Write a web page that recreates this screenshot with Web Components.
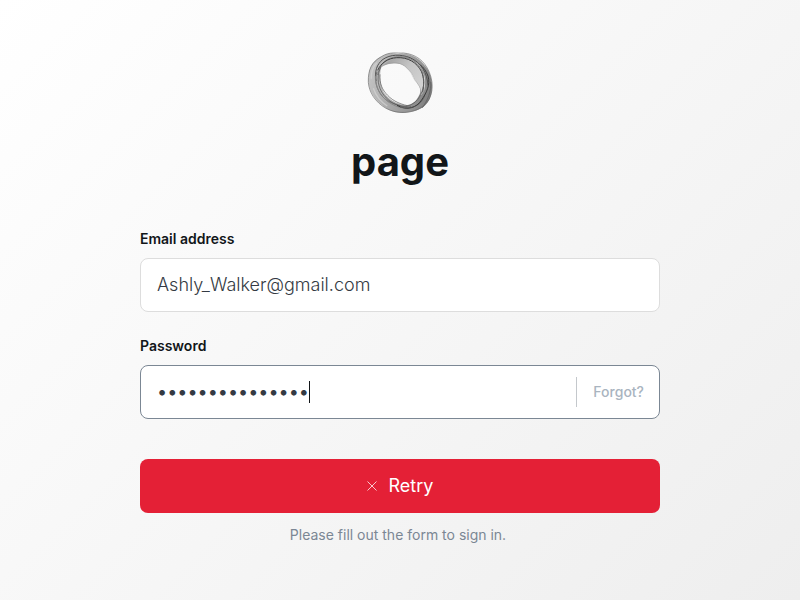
<!DOCTYPE html>
<html lang="en">
<head>
<meta charset="utf-8">
<meta name="viewport" content="width=device-width, initial-scale=1">
<title>Sign in</title>
<style>
html { height: 100%; }
body { margin: 0; min-height: 100%; display: flex; flex-direction: column; font-family: Inter, "Liberation Sans", sans-serif; color: #121619; background: linear-gradient(135deg, #ffffff, #eeeeee); }
</style>
</head>
<body>
<sign-in-page></sign-in-page>
<script>
const define = (name, html, setup) => customElements.define(name, class extends HTMLElement {
  constructor() {
    super();
    this.attachShadow({ mode: "open" }).innerHTML = html;
  }
  connectedCallback() { if (setup) setup(this, this.shadowRoot); }
});

define("brand-ring", `
<style>
:host { display: block; width: 80px; height: 75px; }
svg { display: block; width: 100%; height: 100%; }
</style>
<svg viewBox="0 0 240 225" fill="none" aria-hidden="true">
  <defs>
    <linearGradient id="band" x1="25" y1="90" x2="218" y2="140" gradientUnits="userSpaceOnUse">
      <stop offset="0" stop-color="#c4c4c4"/><stop offset=".35" stop-color="#aeaeae"/><stop offset=".75" stop-color="#949494"/><stop offset="1" stop-color="#7c7c7c"/>
    </linearGradient>
    <linearGradient id="veil" x1="90" y1="45" x2="195" y2="130" gradientUnits="userSpaceOnUse">
      <stop offset="0" stop-color="#a5a5a5"/><stop offset=".4" stop-color="#c4c4c4"/><stop offset="1" stop-color="#d5d5d5"/>
    </linearGradient>
  </defs>
  <path fill="url(#band)" fill-rule="evenodd" d="M25 105C25 65 40 46 66 34C82 24 95 23 112 27C147 20 178 38 198 66C214 87 221 122 213 151C205 182 180 198 145 202C119 208 91 200 69 183C39 160 26 132 25 105ZM64 67C57 92 61 121 72 143C89 164 107 176 132 180C157 184 174 164 181 142C183 124 172 113 164 101C158 88 151 74 140 68C126 52 88 50 64 67Z"/>
  <path fill="url(#veil)" d="M69 61C98 33 142 31 171 53C193 70 201 103 192 139L183 151C186 129 171 117 163 101C158 83 152 81 142 71C128 53 96 50 69 61Z"/>
  <path stroke="#6a6a6a" stroke-width="2" d="M25 112C24 73 35 51 64 35C90 18 112 26 130 24C166 27 194 47 208 82C223 119 219 159 190 183C159 207 111 208 78 190C45 171 27 141 25 112Z"/>
  <path stroke="#505050" stroke-width="3" d="M48 108C44 78 49 59 69 43C91 28 121 27 150 38C184 53 202 84 204 122"/>
  <path stroke="#888" stroke-width="3" d="M52 90C61 55 79 38 112 35C150 32 180 55 194 91"/>
  <path stroke="#3c3c3c" stroke-width="3" d="M53 76C63 54 83 40 110 38C144 36 171 53 184 79C193 99 192 119 188 142"/>
  <path stroke="#4a4a4a" stroke-width="2" d="M63 65C51 89 51 115 65 141C82 169 106 181 136 187C169 192 188 171 195 148"/>
  <path stroke="#555" stroke-width="2" d="M51 80C42 106 50 133 67 154C83 174 116 181 138 186M60 88C58 116 67 135 83 151C99 169 126 180 153 184"/>
  <path stroke="#888" stroke-width="3" d="M46 92C45 126 60 151 84 170C112 190 144 195 170 182"/>
  <path stroke="#3c3c3c" stroke-width="3" d="M111 181C142 199 170 187 184 166C199 145 212 119 204 93C199 79 190 66 181 60"/>
  <path stroke="#666" stroke-width="3" d="M121 187C150 187 173 170 182 149C194 126 194 98 184 77M187 188C202 169 215 137 212 110"/>
  <path stroke="#888" stroke-width="1" d="M66 63C98 47 126 52 141 70C154 79 157 94 164 105C181 124 187 138 179 157C173 171 163 181 148 181"/>
  <path stroke="#d4d4d4" stroke-width="4" opacity=".7" d="M34 101C33 78 39 64 51 53M40 130C49 157 64 172 82 183"/>
</svg>`);

define("text-field", `
<style>
:host { display: block; }
label { display: block; font-size: 14px; font-weight: 600; line-height: 20px; margin-bottom: 9px; }
.box { box-sizing: border-box; display: flex; align-items: center; height: 54px; border: 1px solid #dddddd; border-radius: 8px; background: #fff; }
:host([active]) .box { border-color: #7b8794; }
.entry { position: relative; display: flex; flex: 1; min-width: 0; }
input { box-sizing: border-box; width: 100%; min-width: 0; height: 50px; margin: 0; padding: 0 16px 2px; border: 0; outline: 0; background: none; font: 300 18px/26px Inter, "Liberation Sans", sans-serif; color: #343a43; }
input[type="password"] { font-weight: 400; }
.caret { display: none; position: absolute; left: 168px; top: 14px; width: 1px; height: 22px; background: #121619; }
:host([active]) .caret { display: block; }
</style>
<label for="value"></label>
<div class="box"><div class="entry"><input id="value"><span class="caret"></span></div><slot></slot></div>`,
(host, root) => {
  root.querySelector("label").textContent = host.getAttribute("label");
  const input = root.querySelector("input");
  input.type = host.getAttribute("type");
  input.value = host.getAttribute("value");
});

define("forgot-link", `
<style>
:host { display: flex; align-items: center; height: 30px; border-left: 1px solid #c4c8cc; padding: 0 15px 0 16px; }
a { font-size: 14px; font-weight: 500; line-height: 20px; color: #a9b4c0; text-decoration: none; }
</style>
<a href="#forgot"><slot></slot></a>`);

define("submit-button", `
<style>
:host { display: block; }
button { width: 100%; height: 54px; display: flex; align-items: center; justify-content: center; gap: 12px; padding: 0; border: 0; border-radius: 8px; background: #e42036; color: #fff; font: 400 18px/26px Inter, "Liberation Sans", sans-serif; cursor: pointer; }
svg { width: 10px; height: 10px; }
</style>
<button type="button"><svg viewBox="0 0 10 10" aria-hidden="true"><path d="M.5.5l9 9M9.5.5l-9 9" stroke="#fff" stroke-opacity=".75"/></svg><span><slot></slot></span></button>`);

define("sign-in-page", `
<style>
:host { display: flex; flex: 1; flex-direction: column; align-items: center; padding: 45px 24px 24px; }
h1 { margin: 17px 0 42px; font-size: 40px; font-weight: 700; line-height: 50px; }
form { display: flex; flex-direction: column; width: 100%; max-width: 520px; }
text-field + text-field { margin-top: 24px; }
submit-button { margin-top: 40px; }
p { margin: 12px 4px 0 0; text-align: center; font-size: 14px; line-height: 20px; color: #7b8794; }
</style>
<brand-ring></brand-ring>
<h1>page</h1>
<form>
  <text-field label="Email address" type="email" value="Ashly_Walker@gmail.com"></text-field>
  <text-field label="Password" type="password" value="123456789012345" active><forgot-link>Forgot?</forgot-link></text-field>
  <submit-button>Retry</submit-button>
  <p>Please fill out the form to sign in.</p>
</form>`);
</script>
</body>
</html>
